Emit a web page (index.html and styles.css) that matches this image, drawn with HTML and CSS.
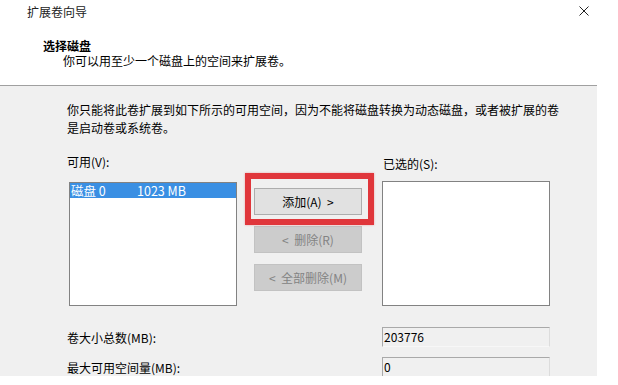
FILE: index.html
```html
<!DOCTYPE html>
<html lang="zh-CN">
<head>
  <meta charset="UTF-8">
  <meta name="viewport" content="width=device-width, initial-scale=1.0">
  <title>扩展卷向导</title>
  <link rel="stylesheet" href="styles.css">
</head>
<body>
  <div class="wizard">
    <header class="header">
      <div class="title-bar">
        <span class="title">扩展卷向导</span>
        <span class="close">
          <svg width="10" height="10" viewBox="0 0 10 10">
            <path d="M0.5 0.5 L9.5 9.5 M9.5 0.5 L0.5 9.5" stroke="#222" stroke-width="1" fill="none"/>
          </svg>
        </span>
      </div>
      <h1 class="step-title">选择磁盘</h1>
      <p class="step-desc">你可以用至少一个磁盘上的空间来扩展卷。</p>
    </header>

    <div class="content">
      <p class="intro">你只能将此卷扩展到如下所示的可用空间，因为不能将磁盘转换为动态磁盘，或者被扩展的卷<br>是启动卷或系统卷。</p>

      <div class="picker">
        <div class="col-left">
          <div class="list-label">可用(V):</div>
          <div class="listbox available">
            <div class="list-item selected"><span class="disk-name">磁盘 0</span><span>1023 MB</span></div>
          </div>
        </div>

        <div class="actions">
          <div class="add-wrap">
            <button class="btn">添加(A)&nbsp; &gt;</button>
            <span class="highlight"></span>
          </div>
          <button class="btn" disabled>&lt;&nbsp; 删除(R)</button>
          <button class="btn" disabled>&lt;&nbsp; 全部删除(M)</button>
        </div>

        <div class="col-right">
          <div class="list-label">已选的(S):</div>
          <div class="listbox chosen"></div>
        </div>
      </div>

      <div class="fields">
        <div class="field">
          <label>卷大小总数(MB):</label>
          <div class="readonly">203776</div>
        </div>
        <div class="field">
          <label>最大可用空间量(MB):</label>
          <div class="readonly">0</div>
        </div>
      </div>
    </div>
  </div>
</body>
</html>
```

FILE: styles.css
```css
* {
  margin: 0;
  padding: 0;
  box-sizing: border-box;
  font-family: "Noto Sans CJK SC", "Noto Sans", sans-serif;
}

body {
  background-color: #ffffff;
  color: #000;
  width: 618px;
  height: 385px;
  overflow: hidden;
}

.wizard {
  width: 597px;
}

.header {
  height: 86px;
  background-color: #ffffff;
  border-bottom: 1px solid #a0a0a0;
}

.title-bar {
  display: flex;
  justify-content: space-between;
  align-items: center;
  padding: 4px 8px 0 27px;
  height: 20px;
}

.title {
  font-size: 12px;
  line-height: 16px;
  color: #222;
}

.close {
  display: flex;
  margin-top: -2px;
}

.step-title {
  font-size: 12px;
  font-weight: bold;
  line-height: 15px;
  margin: 18px 0 0 43px;
}

.step-desc {
  font-size: 12px;
  line-height: 16px;
  margin-left: 63px;
}

.content {
  height: 290px;
  background-color: #f0f0f0;
  padding: 15px 0 0 67px;
  overflow: hidden;
}

.intro {
  font-size: 12px;
  line-height: 18px;
}

.picker {
  display: flex;
  margin-top: 17px;
}

.col-left {
  width: 170px;
}

.list-label {
  font-size: 12px;
  line-height: 16px;
  margin-bottom: 12px;
}

.col-right .list-label {
  margin-left: 1px;
  margin-top: 2px;
  margin-bottom: 9px;
}

.listbox {
  width: 168px;
  height: 124px;
  background-color: #ffffff;
  border: 1px solid #828282;
}

.available {
  margin-left: 2px;
}

.chosen {
  height: 125px;
}

.list-item {
  height: 15px;
  font-size: 12.5px;
  line-height: 15px;
  padding-left: 1px;
  white-space: nowrap;
}

.list-item.selected {
  background-color: #3a8fe3;
  color: #fff;
}

.disk-name {
  display: inline-block;
  width: 66px;
}

.actions {
  display: flex;
  flex-direction: column;
  gap: 11px;
  width: 108px;
  margin-left: 17px;
  padding-top: 34px;
}

.add-wrap {
  position: relative;
}

.btn {
  width: 108px;
  height: 27px;
  font-size: 12px;
  background-color: #e1e1e1;
  border: 1px solid #adadad;
  color: #000;
}

.btn:disabled {
  background-color: #cccccc;
  border-color: #c2c2c2;
  color: #838383;
}

.highlight {
  position: absolute;
  top: -15px;
  left: -9px;
  width: 129px;
  height: 52px;
  border: 6px solid #e0363b;
  box-shadow: 0 0 2px rgba(224, 54, 59, 0.4);
  pointer-events: none;
}

.col-right {
  margin-left: 20px;
}

.fields {
  margin-top: 21px;
}

.field {
  display: flex;
  align-items: center;
  height: 20px;
  margin-bottom: 10px;
}

.field label {
  width: 315px;
  font-size: 12px;
}

.readonly {
  width: 168px;
  height: 20px;
  font-size: 12px;
  line-height: 18px;
  padding-left: 1px;
  background-color: #f0f0f0;
  border: 1px solid #a9a9a9;
  border-right-color: #dcdcdc;
  border-bottom-color: #f7f7f7;
}
```
